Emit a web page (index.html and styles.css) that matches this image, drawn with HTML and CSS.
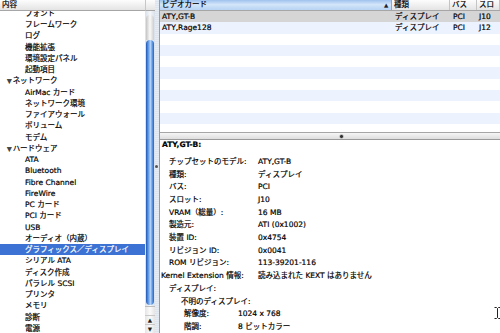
FILE: index.html
```html
<!DOCTYPE html>
<html>
<head>
    <title>システムプロファイラ</title>
    <link rel="stylesheet" href="styles.css">
</head>
<body>
    <div class="window">
        <div class="sidebar">
            <div class="outline">
                <div class="col-header">内容</div>
                <div class="tree">
                    <div class="tree-row">フォント</div>
                    <div class="tree-row">フレームワーク</div>
                    <div class="tree-row">ログ</div>
                    <div class="tree-row">機能拡張</div>
                    <div class="tree-row">環境設定パネル</div>
                    <div class="tree-row">起動項目</div>
                    <div class="tree-row group"><span class="disclosure">▼</span>ネットワーク</div>
                    <div class="tree-row">AirMac カード</div>
                    <div class="tree-row">ネットワーク環境</div>
                    <div class="tree-row">ファイアウォール</div>
                    <div class="tree-row">ボリューム</div>
                    <div class="tree-row">モデム</div>
                    <div class="tree-row group"><span class="disclosure">▼</span>ハードウェア</div>
                    <div class="tree-row">ATA</div>
                    <div class="tree-row">Bluetooth</div>
                    <div class="tree-row">Fibre Channel</div>
                    <div class="tree-row">FireWire</div>
                    <div class="tree-row">PC カード</div>
                    <div class="tree-row">PCI カード</div>
                    <div class="tree-row">USB</div>
                    <div class="tree-row">オーディオ（内蔵）</div>
                    <div class="tree-row selected">グラフィックス／ディスプレイ</div>
                    <div class="tree-row">シリアル ATA</div>
                    <div class="tree-row">ディスク作成</div>
                    <div class="tree-row">パラレル SCSI</div>
                    <div class="tree-row">プリンタ</div>
                    <div class="tree-row">メモリ</div>
                    <div class="tree-row">診断</div>
                    <div class="tree-row">電源</div>
                </div>
            </div>
            <div class="scrollbar">
                <div class="scroll-corner"></div>
                <div class="scroll-track">
                    <div class="track-cap"></div>
                    <div class="thumb"></div>
                </div>
                <div class="scroll-arrows">
                    <div class="arrow">▲</div>
                    <div class="arrow">▼</div>
                </div>
            </div>
        </div>

        <div class="divider"><span class="divider-dimple"></span></div>

        <div class="main">
            <div class="device-table">
                <div class="thead">
                    <div class="th col-name sorted"><span>ビデオカード</span><span class="sort-arrow">▲</span></div>
                    <div class="th col-kind">種類</div>
                    <div class="th col-bus">バス</div>
                    <div class="th col-slot">スロ</div>
                </div>
                <div class="tr selected">
                    <div class="td col-name">ATY,GT-B</div>
                    <div class="td col-kind">ディスプレイ</div>
                    <div class="td col-bus">PCI</div>
                    <div class="td col-slot">J10</div>
                </div>
                <div class="tr alt">
                    <div class="td col-name">ATY,Rage128</div>
                    <div class="td col-kind">ディスプレイ</div>
                    <div class="td col-bus">PCI</div>
                    <div class="td col-slot">J12</div>
                </div>
                <div class="tr"></div>
                <div class="tr alt"></div>
                <div class="tr"></div>
                <div class="tr alt"></div>
                <div class="tr"></div>
                <div class="tr alt"></div>
                <div class="tr"></div>
                <div class="tr alt"></div>
                <div class="tr"></div>
            </div>

            <div class="splitter"><span class="dimple"></span></div>

            <div class="details">
                <div class="detail-title">ATY,GT-B:</div>
                <div class="props">
                    <div class="prop"><span class="prop-label">チップセットのモデル:</span><span>ATY,GT-B</span></div>
                    <div class="prop"><span class="prop-label">種類:</span><span>ディスプレイ</span></div>
                    <div class="prop"><span class="prop-label">バス:</span><span>PCI</span></div>
                    <div class="prop"><span class="prop-label">スロット:</span><span>J10</span></div>
                    <div class="prop"><span class="prop-label">VRAM（総量）:</span><span>16 MB</span></div>
                    <div class="prop"><span class="prop-label">製造元:</span><span>ATI (0x1002)</span></div>
                    <div class="prop"><span class="prop-label">装置 ID:</span><span>0x4754</span></div>
                    <div class="prop"><span class="prop-label">リビジョン ID:</span><span>0x0041</span></div>
                    <div class="prop"><span class="prop-label">ROM リビジョン:</span><span>113-39201-116</span></div>
                    <div class="prop"><span class="prop-label wide">Kernel Extension 情報:</span><span>読み込まれた KEXT はありません</span></div>
                    <div class="prop">ディスプレイ:</div>
                    <div class="prop sub">不明のディスプレイ:</div>
                    <div class="prop sub2"><span class="prop-label">解像度:</span><span>1024 x 768</span></div>
                    <div class="prop sub2"><span class="prop-label">階調:</span><span>8 ビットカラー</span></div>
                </div>
            </div>
        </div>

        <svg class="ibeam" width="7" height="12" viewBox="0 0 7 12">
            <path d="M0.5 0.5h2l1 1 1-1h2M3.5 1.5v9M0.5 11.5h2l1-1 1 1h2" fill="none" stroke="#222" stroke-width="1"/>
        </svg>
    </div>
</body>
</html>
```

FILE: styles.css
```css
* {
    box-sizing: border-box;
}
body {
    margin: 0;
    width: 500px;
    height: 333px;
    overflow: hidden;
    font-family: "DejaVu Sans", "Noto Sans CJK JP", sans-serif;
    font-size: 7.5px;
    color: #000;
    background: #fff;
    -webkit-text-stroke: 0.2px #000;
}
.window {
    position: relative;
    display: flex;
    height: 333px;
}

/* left outline */
.sidebar {
    display: flex;
    width: 155px;
    flex-shrink: 0;
    background: #fff;
}
.outline {
    width: 145px;
    overflow: hidden;
}
.col-header {
    position: relative;
    z-index: 1;
    height: 11px;
    line-height: 10px;
    padding-left: 2px;
    background: linear-gradient(#fdfdfd, #e4e4e4);
    border-bottom: 1px solid #a6a6a6;
}
.tree {
    margin-top: -3.25px;
}
.tree-row {
    height: 11.25px;
    line-height: 11.25px;
    padding-left: 25px;
    white-space: nowrap;
}
.tree-row.group {
    padding-left: 7px;
}
.tree-row.selected {
    background: #3b72d3;
    color: #fff;
    -webkit-text-stroke: 0.2px #fff;
}
.disclosure {
    font-size: 6px;
    color: #444;
    margin-right: 1px;
}

/* aqua scrollbar */
.scrollbar {
    display: flex;
    flex-direction: column;
    width: 10px;
}
.scroll-corner {
    height: 11px;
    background: linear-gradient(#fdfdfd, #e4e4e4);
    border-bottom: 1px solid #a6a6a6;
    border-left: 1px solid #c6c6c6;
}
.scroll-track {
    flex: 1;
    padding: 4px 1px 0;
    background: linear-gradient(to right, #d8e0ea, #f6f8fb 50%, #d8e0ea);
}
.track-cap {
    height: 25px;
    border-radius: 4px 4px 0 0;
    background: linear-gradient(to right, #c4c4c4, #fafafa 50%, #cdcdcd);
}
.thumb {
    height: 265px;
    border-radius: 4px;
    background: linear-gradient(to right, #1f56b4, #6fa6ec 35%, #b5d4f8 55%, #5b94e2 80%, #2a62c0);
}
.scroll-arrows {
    height: 27px;
    display: flex;
    flex-direction: column;
    justify-content: flex-end;
    background: linear-gradient(to right, #e4e4e4, #fbfbfb 50%, #e4e4e4);
    border-top: 1px solid #bdbdbd;
}
.arrow {
    height: 9px;
    line-height: 9px;
    font-size: 5px;
    text-align: center;
    color: #222;
    border-top: 1px solid #c8c8c8;
}

.divider {
    width: 5px;
    flex-shrink: 0;
    background: repeating-linear-gradient(#e6ecf3 0, #e6ecf3 1px, #dde4ed 1px, #dde4ed 2px);
    border-right: 1px solid #9a9a9a;
    padding-top: 165px;
}
.divider-dimple {
    display: block;
    width: 3px;
    height: 3px;
    border-radius: 50%;
    background: #555;
}

/* right side */
.main {
    flex: 1;
    display: flex;
    flex-direction: column;
    min-width: 0;
}
.device-table {
    height: 132px;
    overflow: hidden;
    background: #fff;
}
.thead {
    display: flex;
    height: 11px;
    border-bottom: 1px solid #a6a6a6;
}
.th {
    line-height: 10px;
    padding-left: 2px;
    background: linear-gradient(#fdfdfd, #e4e4e4);
    border-right: 1px solid #c4c4c4;
    white-space: nowrap;
    overflow: hidden;
}
.th.sorted {
    display: flex;
    justify-content: space-between;
    background: linear-gradient(#9fc2ee, #d3e5f9 45%, #b7d3f4);
    border-right-color: #8aa9cf;
}
.sort-arrow {
    font-size: 5px;
    color: #223;
    padding-right: 3px;
}
.col-name { width: 232px; }
.col-kind { width: 58px; }
.col-bus { width: 27px; }
.col-slot { flex: 1; }
.tr {
    display: flex;
    height: 11.3px;
    line-height: 11.3px;
}
.tr.alt {
    background: #edf3fe;
}
.tr.selected {
    background: #d5d5d5;
}
.td {
    padding-left: 2px;
    white-space: nowrap;
}
.td.col-kind,
.td.col-bus {
    padding-left: 3px;
}

.splitter {
    height: 8px;
    padding-left: 179px;
    display: flex;
    align-items: center;
    background: linear-gradient(#f6f6f6, #dedede);
    border-top: 1px solid #a6a6a6;
    border-bottom: 1px solid #9a9a9a;
}
.dimple {
    width: 5px;
    height: 5px;
    border-radius: 50%;
    background: radial-gradient(#333 0, #333 1px, #bdbdbd 2px, #f0f0f0 3px);
}

.details {
    flex: 1;
    overflow: hidden;
    padding-left: 2px;
    background: #fff;
}
.detail-title {
    font-weight: bold;
    height: 12.7px;
    line-height: 12.7px;
    margin-top: -1px;
}
.props {
    margin-top: 4.3px;
    padding-left: 7px;
}
.prop {
    display: flex;
    height: 12.7px;
    line-height: 12.7px;
    white-space: nowrap;
}
.prop-label {
    width: 89px;
    flex-shrink: 0;
}
.prop-label.wide {
    margin-left: -8px;
    width: 97px;
}
.prop.sub {
    padding-left: 12px;
}
.prop.sub2 {
    padding-left: 15px;
}
.prop.sub2 .prop-label {
    width: 54px;
}

.ibeam {
    position: absolute;
    left: 494px;
    top: 307px;
}
```
